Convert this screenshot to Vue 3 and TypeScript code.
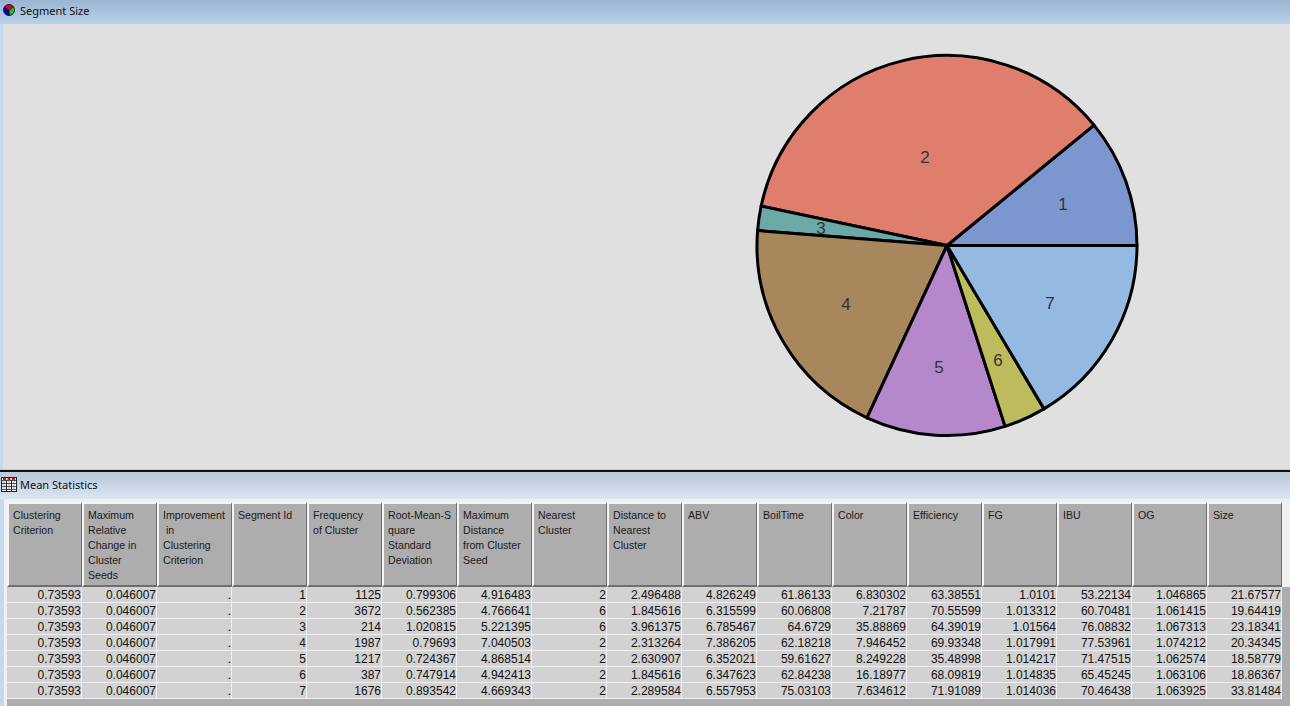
<template>
  <div class="window">
    <div class="titlebar top-bar">
      <svg class="title-icon" width="12" height="12" viewBox="0 0 12 12">
        <circle cx="6" cy="6" r="5.5" fill="#0000c0" />
        <path d="M6 6.5 L1.6 2.8 A5.5 5.5 0 0 1 10.4 2.8 Z" fill="#e00010" />
        <path d="M6 6.5 L10.4 2.8 A5.5 5.5 0 0 1 6.6 11.4 Z" fill="#10c820" />
        <path d="M6 6.5 L1.6 2.8 M6 6.5 L10.4 2.8 M6 6.5 L6.6 11.4" stroke="#111" stroke-width="0.6" />
        <circle cx="6" cy="6" r="5.5" fill="none" stroke="#111" stroke-width="0.8" />
      </svg>
      <span>Segment Size</span>
    </div>
    <div class="chart-pane">
      <svg class="pie" width="1287" height="445" viewBox="3 24 1287 445">
        <path
          v-for="s in slices"
          :key="s.id"
          :d="s.path"
          :fill="s.color"
          stroke="#000"
          stroke-width="3"
          stroke-linejoin="round"
        />
        <text v-for="s in slices" :key="'l' + s.id" :x="s.lx" :y="s.ly" class="pie-label">{{ s.id }}</text>
      </svg>
    </div>
    <div class="divider"></div>
    <div class="titlebar stats-bar">
      <svg class="title-icon" width="16" height="15" viewBox="0 0 16 15">
        <rect x="0.5" y="0.5" width="15" height="14" fill="#f4f4f4" stroke="#222" />
        <path d="M2 2H5M6.5 2H9.5M11 2H14" stroke="#c02020" stroke-width="2" />
        <path d="M1 3.5H15M1 6.5H15M1 9.5H15M1 12.5H15" stroke="#555" />
        <path d="M5.5 3V14M10.5 3V14" stroke="#222" />
        <path d="M2 5H4M7 5H9M12 5H14M2 8H4M7 8H9M12 8H14M2 11H4M7 11H9M12 11H14" stroke="#aaa" />
      </svg>
      <span>Mean Statistics</span>
    </div>
    <div class="table-pane">
      <div class="table-wrap">
        <div class="header-row">
          <div v-for="h in headers" :key="h" class="head-cell">{{ h }}</div>
        </div>
        <div class="body-rows">
          <div v-for="(row, i) in rows" :key="i" class="data-row">
            <div v-for="(val, j) in row" :key="j" class="data-cell">{{ val }}</div>
          </div>
        </div>
      </div>
    </div>
  </div>
</template>

<script setup lang="ts">
const headers: string[] = [
  'Clustering\nCriterion',
  'Maximum\nRelative\nChange in\nCluster\nSeeds',
  'Improvement\n in\nClustering\nCriterion',
  'Segment Id',
  'Frequency\nof Cluster',
  'Root-Mean-S\nquare\nStandard\nDeviation',
  'Maximum\nDistance\nfrom Cluster\nSeed',
  'Nearest\nCluster',
  'Distance to\nNearest\nCluster',
  'ABV',
  'BoilTime',
  'Color',
  'Efficiency',
  'FG',
  'IBU',
  'OG',
  'Size',
];

const rows: string[][] = [
  ['0.73593', '0.046007', '.', '1', '1125', '0.799306', '4.916483', '2', '2.496488', '4.826249', '61.86133', '6.830302', '63.38551', '1.0101', '53.22134', '1.046865', '21.67577'],
  ['0.73593', '0.046007', '.', '2', '3672', '0.562385', '4.766641', '6', '1.845616', '6.315599', '60.06808', '7.21787', '70.55599', '1.013312', '60.70481', '1.061415', '19.64419'],
  ['0.73593', '0.046007', '.', '3', '214', '1.020815', '5.221395', '6', '3.961375', '6.785467', '64.6729', '35.88869', '64.39019', '1.01564', '76.08832', '1.067313', '23.18341'],
  ['0.73593', '0.046007', '.', '4', '1987', '0.79693', '7.040503', '2', '2.313264', '7.386205', '62.18218', '7.946452', '69.93348', '1.017991', '77.53961', '1.074212', '20.34345'],
  ['0.73593', '0.046007', '.', '5', '1217', '0.724367', '4.868514', '2', '2.630907', '6.352021', '59.61627', '8.249228', '35.48998', '1.014217', '71.47515', '1.062574', '18.58779'],
  ['0.73593', '0.046007', '.', '6', '387', '0.747914', '4.942413', '2', '1.845616', '6.347623', '62.84238', '16.18977', '68.09819', '1.014835', '65.45245', '1.063106', '18.86367'],
  ['0.73593', '0.046007', '.', '7', '1676', '0.893542', '4.669343', '2', '2.289584', '6.557953', '75.03103', '7.634612', '71.91089', '1.014036', '70.46438', '1.063925', '33.81484'],
];

// pie geometry, slices go counter-clockwise from 3 o'clock
const cx = 947;
const cy = 245.5;
const r = 190;

// end = slice end angle in degrees
const segments = [
  { id: 1, end: 39.3, color: '#7c96cf', lx: 1063, ly: 210 },
  { id: 2, end: 168, color: '#e07e6e', lx: 925, ly: 163 },
  { id: 3, end: 175.5, color: '#6aa9a5', lx: 821, ly: 234 },
  { id: 4, end: 245.1, color: '#a8875d', lx: 846, ly: 310 },
  { id: 5, end: 287.8, color: '#b588cc', lx: 939, ly: 373 },
  { id: 6, end: 300.7, color: '#bcbc5e', lx: 998, ly: 366 },
  { id: 7, end: 360, color: '#94bae2', lx: 1050, ly: 309 },
];

let angle = 0;
const slices = segments.map((s) => {
  const start = angle;
  angle = (s.end * Math.PI) / 180;
  const x1 = cx + r * Math.cos(start);
  const y1 = cy - r * Math.sin(start);
  const x2 = cx + r * Math.cos(angle);
  const y2 = cy - r * Math.sin(angle);
  return {
    ...s,
    path: `M${cx} ${cy} L${x1} ${y1} A${r} ${r} 0 0 0 ${x2} ${y2} Z`,
  };
});
</script>

<style>
html,
body {
  margin: 0;
  overflow: hidden;
}
</style>

<style scoped>
.window {
  width: 1290px;
  height: 706px;
  display: flex;
  flex-direction: column;
  overflow: hidden;
  background: #c5d9ee;
}
.titlebar {
  display: flex;
  align-items: center;
  box-sizing: border-box;
  padding-bottom: 4px;
  font-family: "Noto Sans", sans-serif;
  font-size: 11px;
  color: #111;
  flex-shrink: 0;
}
.title-icon {
  flex-shrink: 0;
}
.top-bar {
  height: 24px;
  padding-left: 3px;
  gap: 5px;
  background: linear-gradient(#9ab4d1, #b9d1ea);
}
.chart-pane {
  height: 445px;
  flex-shrink: 0;
  margin-left: 3px;
  background: #e0e0e0;
}
.pie {
  display: block;
}
.pie-label {
  font-family: "Liberation Sans", Arial, sans-serif;
  font-size: 17px;
  fill: #333;
  text-anchor: middle;
}
.divider {
  height: 4px;
  flex-shrink: 0;
  background: linear-gradient(#a8d0ee 0 1px, #111 1px 3px, #bcc9d8 3px);
}
.stats-bar {
  height: 26px;
  padding-left: 1px;
  gap: 3px;
  background: linear-gradient(#b9c8da, #d9e6f4);
}
.table-pane {
  flex: 1;
  margin-left: 4px;
  padding: 3px 0 0 3px;
  background: #f0f0f0;
  min-height: 0;
}
.table-wrap {
  display: flex;
  flex-direction: column;
  height: 100%;
}
.header-row {
  display: flex;
  height: 85px;
  flex-shrink: 0;
}
.head-cell {
  width: 75px;
  box-sizing: border-box;
  flex-shrink: 0;
  padding: 4px 0 0 4px;
  border-top: 2px solid #f4f4f4;
  border-left: 2px solid #f4f4f4;
  border-right: 1px solid #6e6e6e;
  border-bottom: 2px solid #6e6e6e;
  background: #adadad;
  font-family: "Liberation Sans", Arial, sans-serif;
  font-size: 10.6px;
  line-height: 15px;
  color: #1a1a1a;
  white-space: pre;
  overflow: hidden;
}
.body-rows {
  flex: 1;
  background: #adadad;
}
.data-row {
  display: flex;
  height: 16px;
}
.data-cell {
  width: 75px;
  box-sizing: border-box;
  flex-shrink: 0;
  padding: 1px 0 0;
  border-right: 1px solid #efefef;
  border-bottom: 1px solid #efefef;
  background: #d2d2d2;
  font-family: "Liberation Sans", Arial, sans-serif;
  font-size: 12px;
  line-height: 15px;
  color: #111;
  text-align: right;
  overflow: hidden;
}
</style>
